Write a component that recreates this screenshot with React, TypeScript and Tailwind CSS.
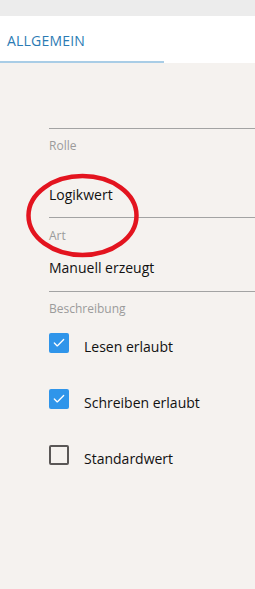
import { Check } from "lucide-react";

const font = { fontFamily: '"Open Sans", "Noto Sans", sans-serif' };

interface FieldProps {
  label: string;
  value?: string;
  labelGap: string;
  valueGap: string;
  bottomGap: string;
}

function Field({ label, value, labelGap, valueGap, bottomGap }: FieldProps) {
  return (
    <div className="border-t border-[#a3a3a3]">
      <p className={`${labelGap} text-[12px] leading-4 text-[#9b9b9b]`}>
        {label}
      </p>
      {value ? (
        <p className={`${valueGap} ${bottomGap} text-[14px] leading-5 text-[#111]`}>
          {value}
        </p>
      ) : null}
    </div>
  );
}

function CheckRow({ label, checked }: { label: string; checked: boolean }) {
  return (
    <div className="flex items-start gap-[15px]">
      {checked ? (
        <div className="flex size-5 items-center justify-center rounded-[2px] bg-[#2f95ea]">
          <Check className="size-[14px] text-white" strokeWidth={2.25} />
        </div>
      ) : (
        <div className="size-5 rounded-[2px] border-2 border-[#5a5756]" />
      )}
      <span className="mt-[4px] text-[14px] leading-5 text-[#111]">{label}</span>
    </div>
  );
}

export default function App() {
  return (
    <div className="relative h-[589px] w-[255px] overflow-hidden bg-[#f5f2ef]" style={font}>
      <div className="h-4 bg-[#ececec]" />
      <div className="h-[47px] bg-white">
        <div className="flex h-full w-[164px] flex-col justify-between border-b-2 border-[#a9cde6]">
          <span className="mt-[15px] pl-[7px] text-[14px] leading-5 tracking-[0.2px] text-[#2b7bb4]">
            ALLGEMEIN
          </span>
        </div>
      </div>

      <div className="pl-[49px] pt-[65px]">
        <Field label="Rolle" value="Logikwert" labelGap="mt-[9px]" valueGap="mt-[31px]" bottomGap="mb-[12px]" />
        <Field label="Art" value="Manuell erzeugt" labelGap="mt-[10px]" valueGap="mt-[14px]" bottomGap="mb-[13px]" />
        <Field label="Beschreibung" labelGap="mt-[9px]" valueGap="" bottomGap="" />
        <div className="mt-[16px] flex flex-col gap-8">
          <CheckRow label="Lesen erlaubt" checked />
          <CheckRow label="Schreiben erlaubt" checked />
          <CheckRow label="Standardwert" checked={false} />
        </div>
      </div>

      <svg className="absolute left-0 top-0" width="255" height="589" viewBox="0 0 255 589">
        <ellipse cx="82.5" cy="215.5" rx="54" ry="39.5" fill="none" stroke="#e3141f" strokeWidth="4.5" />
      </svg>
    </div>
  );
}
